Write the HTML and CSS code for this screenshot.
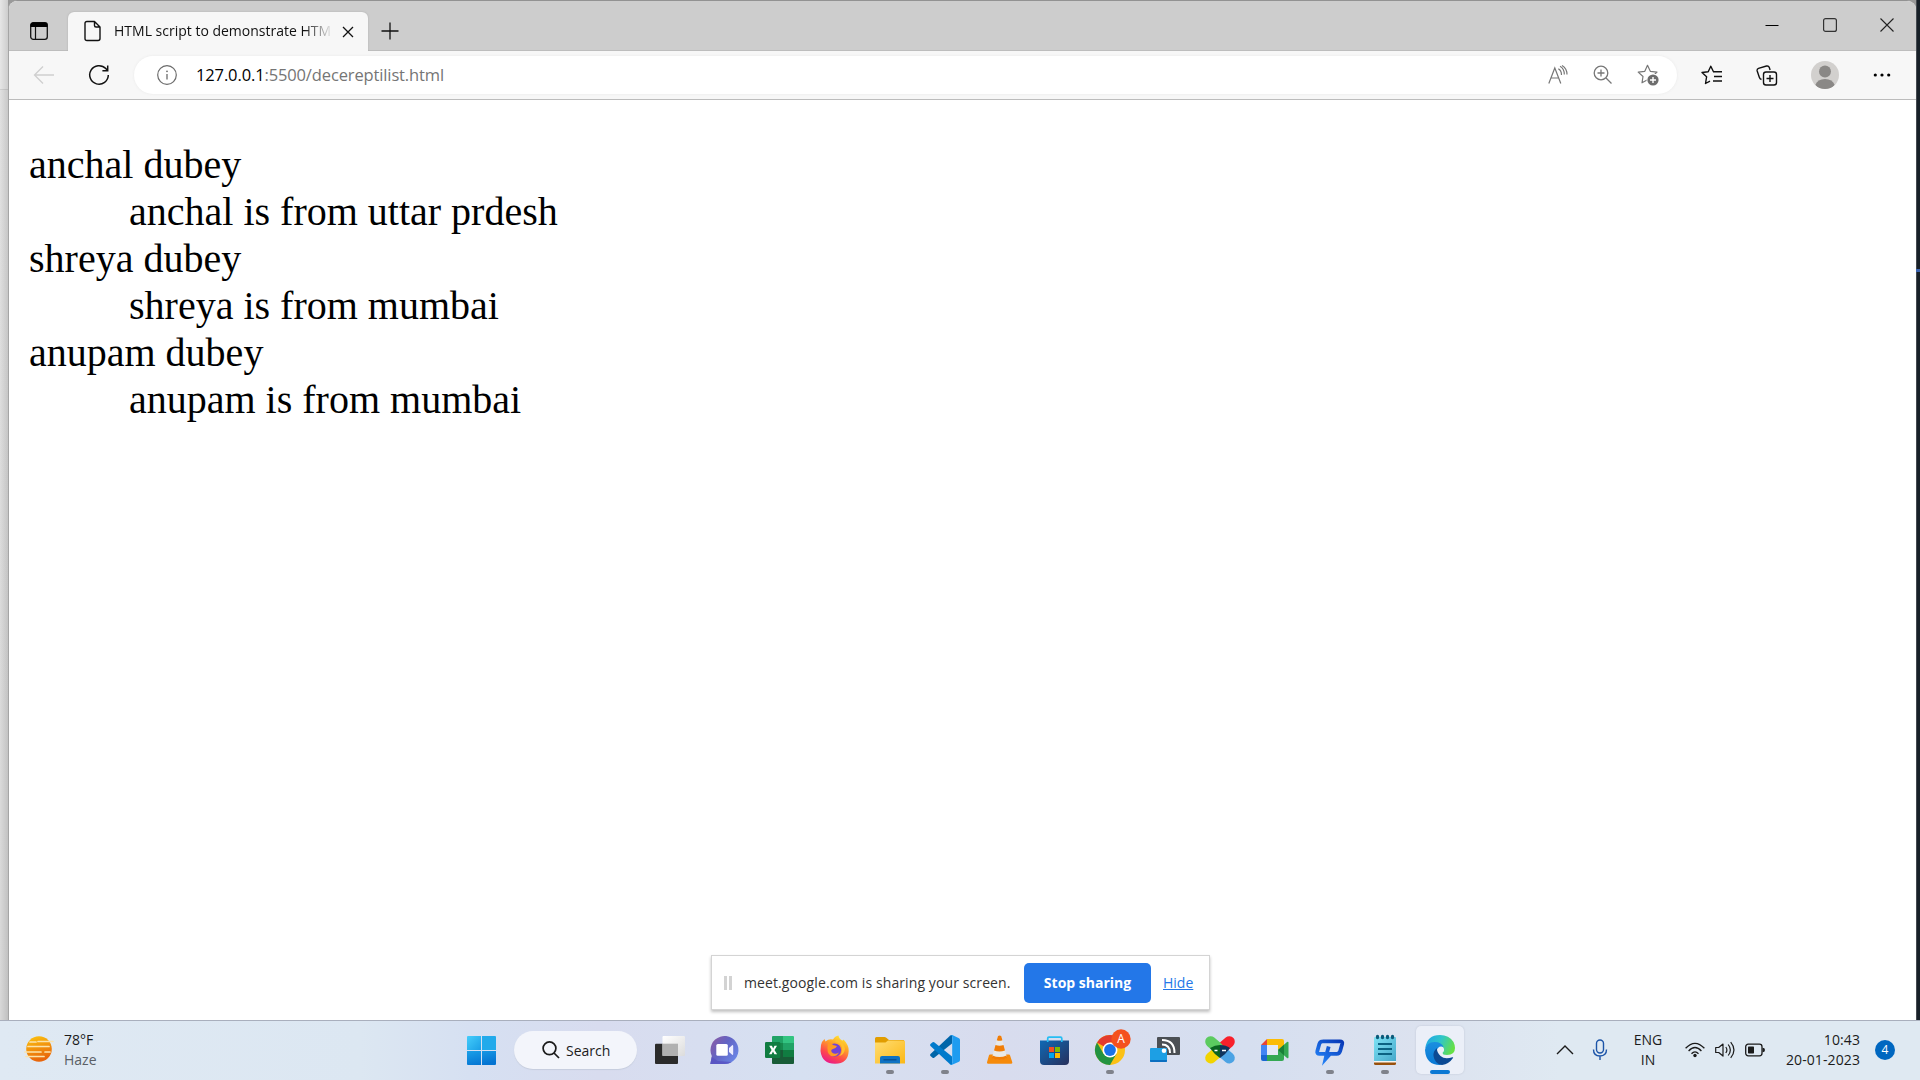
FILE: index.html
```html
<!DOCTYPE html>
<html lang="en">
<head>
<meta charset="utf-8">
<title>HTML script to demonstrate HTML description list</title>
<link rel="stylesheet" href="styles.css">
</head>
<body>
<main class="desktop">
  <div class="behind-left"></div>
  <section class="window">
    <header class="tabstrip">
      <button class="tab-actions" aria-label="Tab actions"><svg width="20" height="20" viewBox="0 0 20 20"><rect x="1.7" y="1.7" width="16.6" height="16.6" rx="2.6" fill="none" stroke="#111" stroke-width="1.3"/><path d="M1.5 6V4q0-2.500 2.500-2.500h12q2.500 0 2.500 2.500v2z" fill="#000"/><path d="M6.500 6v12" stroke="#111" stroke-width="1.200"/></svg></button>
      <div class="tab">
        <svg class="page-icon" width="18" height="22" viewBox="0 0 18 22" fill="none" stroke="#111" stroke-width="1.400" stroke-linejoin="round"><path d="M3 1.500h7.500l5.500 5.500v11.500q0 2-2 2H3q-2 0-2-2v-15q0-2 2-2zM10.500 1.500v4q0 1.500 1.500 1.500h4"/></svg>
        <span class="tab-title">HTML script to demonstrate HTM</span>
        <svg class="tab-close" width="12" height="12" viewBox="0 0 12 12"><path d="M1 1l10 10M11 1L1 11" stroke="#111" stroke-width="1.300"/></svg>
      </div>
      <svg class="new-tab" width="18" height="18" viewBox="0 0 18 18"><path d="M9 .5v17M.5 9h17" stroke="#111" stroke-width="1.300"/></svg>
      <div class="caption-buttons">
        <svg width="14" height="14" viewBox="0 0 14 14"><path d="M.5 7.500h13" stroke="#000" stroke-width="1"/></svg>
        <svg width="14" height="14" viewBox="0 0 14 14"><rect x=".6" y=".6" width="12.800" height="12.800" rx="2" fill="none" stroke="#333" stroke-width="1.200"/></svg>
        <svg width="14" height="14" viewBox="0 0 14 14"><path d="M.5 .5l13 13M13.500 .5l-13 13" stroke="#222" stroke-width="1.100"/></svg>
      </div>
    </header>
    <nav class="toolbar">
      <svg class="back" width="22" height="20" viewBox="0 0 22 20" fill="none" stroke="#cfcfcf" stroke-width="1.300"><path d="M21 10H1.500M10 1.500L1.500 10l8.500 8.500"/></svg>
      <svg class="reload" width="22" height="22" viewBox="0 0 22 22" fill="none" stroke="#111" stroke-width="1.500"><path d="M20.300 11a9.300 9.300 0 1 1-2.500-6.400l1.700 2"/><path d="M19.700 1.500v5.300h-5.300"/></svg>
      <div class="address">
        <svg class="info" width="20" height="20" viewBox="0 0 20 20"><circle cx="10" cy="10" r="9.300" fill="none" stroke="#6b6b6b" stroke-width="1.200"/><path d="M10 9v5.500" stroke="#6b6b6b" stroke-width="1.300"/><circle cx="10" cy="6.300" r=".9" fill="#6b6b6b"/></svg>
        <span class="url"><b>127.0.0.1</b>:5500/decereptilist.html</span>
        <div class="address-icons">
          <svg width="20" height="20" viewBox="0 0 20 20" fill="none" stroke="#777" stroke-width="1.200"><path d="M.8 18.500L6.800 3l6 15.500M2.800 13h8M10.300 3.800q3.200 1.700 3.200 6.200M12 1.200q4.300 2.200 4.300 8.300M14 .5q5 3 5 9"/></svg>
          <svg width="20" height="20" viewBox="0 0 20 20" fill="none" stroke="#777" stroke-width="1.300"><circle cx="8" cy="8" r="6.800"/><path d="M13 13l5.500 5.500M8 4.500v7M4.500 8h7"/></svg>
          <svg width="22" height="22" viewBox="0 0 22 22"><path d="M10.500 1.300l2.800 6 6.700.8-5 4.700 1 6-5.500-3-5.500 3 1-6.300L1.200 8.100l6.600-.8z" fill="none" stroke="#777" stroke-width="1.200" stroke-linejoin="round"/><circle cx="16" cy="16" r="6.500" fill="#fff"/><circle cx="16" cy="16" r="5.600" fill="#6d6d6d"/><path d="M16 13v6M13 16h6" stroke="#fff" stroke-width="1.400"/></svg>
        </div>
      </div>
      <div class="browser-icons">
        <svg width="22" height="20" viewBox="0 0 22 20" fill="none" stroke="#111" stroke-width="1.400" stroke-linejoin="round"><path d="M12.500 6.800L9.800 1.200 7.200 6.700l-6.200.8 4.600 4.300L4.500 18.500l4.500-2.400M12 6.800h9M13 11.500h8M12 16h9"/></svg>
        <svg width="22" height="21" viewBox="0 0 22 21" fill="none" stroke="#111" stroke-width="1.400"><rect x="7.500" y="7" width="13" height="13" rx="2.500"/><path d="M14 10v7M10.500 13.500h7M5.500 14.500Q3.800 14 3.300 12.200L1.200 6Q.7 4 2.500 3.300L10.500 1Q12.700.6 13.300 2.500l.8 2.500"/></svg>
        <svg width="28" height="28" viewBox="0 0 28 28"><defs><clipPath id="face"><circle cx="14" cy="14" r="14"/></clipPath></defs><circle cx="14" cy="14" r="14" fill="#d2d0ce"/><g clip-path="url(#face)" fill="#8a8886"><circle cx="14" cy="10.500" r="6"/><path d="M4.300 24Q6.500 18 14 18t9.700 6L20 28H8z"/></g></svg>
        <svg class="more" width="18" height="6" viewBox="0 0 18 6" fill="#000"><circle cx="2.300" cy="3" r="1.600"/><circle cx="9" cy="3" r="1.600"/><circle cx="15.700" cy="3" r="1.600"/></svg>
      </div>
    </nav>
    <article class="page">
      <dl class="people">
        <dt>anchal dubey</dt><dd>anchal is from uttar prdesh</dd>
        <dt>shreya dubey</dt><dd>shreya is from mumbai</dd>
        <dt>anupam dubey</dt><dd>anupam is from mumbai</dd>
      </dl>
    </article>
  </section>
  <div class="behind-right"><i class="accent"></i></div>
  <aside class="share-bar">
    <i class="grip"></i>
    <span class="share-text">meet.google.com is sharing your screen.</span>
    <button class="stop">Stop sharing</button>
    <a class="hide">Hide</a>
  </aside>
</main>
<footer class="taskbar">
  <div class="weather">
    <svg width="30" height="28" viewBox="0 0 30 28"><defs><linearGradient id="sun" x1="0" y1="0" x2=".3" y2="1"><stop stop-color="#fcc60e"/><stop offset="1" stop-color="#e8660c"/></linearGradient></defs><circle cx="15" cy="14" r="12.800" fill="url(#sun)"/><g stroke="#fbe3ac" stroke-width="1.700" stroke-linecap="round"><path d="M6 7h6M14 6.500h15M4 11.500h13M16 11.500h9"/><path d="M1 17h16M21 17h5M2 21.500h18"/></g></svg>
    <div class="weather-text"><span class="temp">78°F</span><span class="sky">Haze</span></div>
  </div>
  <div class="apps">
    <div class="app"><svg viewBox="0 0 32 32"><defs><linearGradient id="win" x1="0" y1="0" x2="1" y2="1" gradientUnits="objectBoundingBox"><stop stop-color="#45cdfb"/><stop offset="1" stop-color="#1a9fe6"/></linearGradient><linearGradient id="winb" x1="0" y1="0" x2=".5" y2="1"><stop stop-color="#1ba0e8"/><stop offset="1" stop-color="#0474d2"/></linearGradient></defs><path d="M3 2h13v14H2V3q0-1 1-1z" fill="url(#win)"/><path d="M17 2h13q1 0 1 1v13H17z" fill="#22aaeb"/><path d="M2 17h14v14H3q-1 0-1-1zM17 17h14v13q0 1-1 1H17z" fill="url(#winb)"/></svg></div>
    <div class="search"><svg width="18" height="18" viewBox="0 0 18 18" fill="none" stroke="#1b1b1b" stroke-width="1.700"><circle cx="7.500" cy="7.300" r="6.400"/><path d="M12 12l5 5"/></svg><span>Search</span></div>
    <div class="app"><svg viewBox="0 0 32 32"><defs><linearGradient id="tv" x1="0" y1="0" x2="1" y2="1"><stop stop-color="#fff"/><stop offset="1" stop-color="#dcdcdc"/></linearGradient></defs><rect x="1" y="9.700" width="23" height="20.300" rx="1" fill="#2b2b2b"/><rect x="8.500" y="2" width="22.500" height="20" rx="1" fill="url(#tv)"/><rect x="8.500" y="9.700" width="15.500" height="12.300" fill="#b1b1b1"/></svg></div>
    <div class="app"><svg viewBox="0 0 32 32"><defs><linearGradient id="chat" x1="0" y1="0" x2="1" y2=".7"><stop stop-color="#91599f"/><stop offset=".5" stop-color="#6264c4"/><stop offset="1" stop-color="#6b86e6"/></linearGradient></defs><path d="M1.300 30L2.800 22A14 14 0 1 1 15.700 30z" fill="url(#chat)"/><path d="M1.300 30l1.500-7 6 4 14 1q-3 2-7 2z" fill="#5751c2" opacity=".8"/><rect x="7.300" y="10" width="11.500" height="11.700" rx="1.500" fill="#fff"/><path d="M20 14l3.500-3q.7 0 .7 1v8q0 1-.7 1L20 18z" fill="#eef"/></svg></div>
    <div class="app"><svg viewBox="0 0 32 32"><path d="M9 2h10v7H8V3q0-1 1-1z" fill="#21a366"/><path d="M19 2h10q1 0 1 1v6H19z" fill="#33c481"/><path d="M8 9h11v7H8z" fill="#16884c"/><path d="M19 9h11v7H19z" fill="#21a366"/><path d="M19 16h11v7H19z" fill="#107c41"/><path d="M8 16h11v7h11v6q0 1-1 1H9q-1 0-1-1z" fill="#185c37"/><rect x="1" y="8" width="15.300" height="16" rx="1.300" fill="#107c41"/><path d="M5.200 11.800h2.700l1.300 2.600 1.300-2.600h2.500l-2.500 4.200 2.600 4.300h-2.700l-1.400-2.800-1.400 2.800H5l2.600-4.300z" fill="#fff"/></svg></div>
    <div class="app"><svg viewBox="0 0 32 32"><defs><linearGradient id="ff" x1=".8" y1="0" x2=".3" y2="1"><stop stop-color="#fff036"/><stop offset=".35" stop-color="#ffa427"/><stop offset=".7" stop-color="#ff4a4a"/><stop offset="1" stop-color="#e9188c"/></linearGradient></defs><path d="M2 11q1-4 3.500-6l1 2.500Q10 4.300 14 5.500 16 2 19.500 1.500q.5 3.500 4 5 1-.3 1-1Q30 11 29.700 17 29 29.700 16 29.700T1.500 17z" fill="url(#ff)"/><circle cx="15.500" cy="16" r="6.600" fill="#7142d8"/><path d="M9 9q4 0 5 2l4 1q-1 2.500-4 3-3 1-1 3.500 3 2.500 7 0-3 5-8 3.500-5-2-3-13z" fill="#ff9a22"/><path d="M16 8q6 0 7 6 .5 5-3 8 5-1 6-7-1-7-8-10z" fill="#ffc12f"/></svg></div>
    <div class="app running"><svg viewBox="0 0 32 32"><defs><linearGradient id="fold" x1="0" y1="0" x2="1" y2="1"><stop stop-color="#ffdd73"/><stop offset="1" stop-color="#fbb815"/></linearGradient></defs><path d="M1 9V4.500Q1 3 2.500 3h8q1 0 1.800.8L15 6h15v4z" fill="#e19d00"/><path d="M1 8.500h10.500L14 6.500h16q1 0 1 1v22H1z" fill="url(#fold)"/><path d="M6 29.500v-5.500q0-2 2-2h16q2 0 2 2v5.500z" fill="#0e72c4"/><path d="M9.500 25.800h13" stroke="#064a8c" stroke-width="1.200"/></svg></div>
    <div class="app running"><svg viewBox="0 0 32 32"><path d="M23 1v8.500L5.200 23.800q-.8.600-1.600 0L1.500 22q-1-1 0-2L21 1.700q1-.9 2-.7z" fill="#0065a9"/><path d="M23 31v-8.500L5.200 8.200q-.8-.6-1.600 0L1.500 10q-1 1 0 2L21 30.300q1 .9 2 .7z" fill="#007acc"/><path d="M22.500 31q-1-.2-1.800-1 2.300 1.300 2.500-1V3q-.2-2.300-2.500-1 1-1.200 2.600-1L30 4.200q1 .5 1 1.800v20q0 1.300-1 1.800z" fill="#1f9cf0"/></svg></div>
    <div class="app"><svg viewBox="0 0 32 32"><path d="M6 20.500h19q.8 0 1 .8l2.300 7q.3 1.400-1 1.400H4q-1.300 0-1-1.400l2-7q.2-.8 1-.8z" fill="#f58a0b"/><path d="M14 2q1.600-1 3.200 0L23 23.500q-7.500 4-15 0z" fill="#e9e9e7"/><path d="M14 2q1.600-1 3.200 0l1.200 4.300q-2.800 1-5.600 0zM11.500 11q4 1.500 8 0l1.500 5.500q-5.500 2-11 0zM8.500 21.500q7 3 14 0l.7 2.500q-7.700 4-15.400 0z" fill="#f07d08"/></svg></div>
    <div class="app"><svg viewBox="0 0 32 32"><defs><linearGradient id="store" x1="0" y1="0" x2="1" y2="1"><stop stop-color="#0f69b5"/><stop offset="1" stop-color="#28305c"/></linearGradient></defs><path d="M1 6.500h29V27q0 4-4 4H5q-4 0-4-4z" fill="url(#store)"/><path d="M8.700 8V4.500q0-1.300 1.300-1.300h11.500q1.300 0 1.300 1.300V8" fill="none" stroke="#26bdf3" stroke-width="1.700"/><path d="M10 13h5v5h-5z" fill="#f25022"/><path d="M16 13h5v5h-5z" fill="#7fba00"/><path d="M10 19h5v5h-5z" fill="#00a4ef"/><path d="M16 19h5v5h-5z" fill="#ffb900"/></svg></div>
    <div class="app running"><svg viewBox="0 0 32 32"><circle cx="16" cy="16" r="15" fill="#fbc116"/><path d="M16 16L3 8.500A15 15 0 0 1 29 8.500H16z" fill="#e33b2e"/><path d="M16 16l6.500 3.700L16 31A15 15 0 0 1 3 8.500l6.500 11.200z" fill="#229342"/><circle cx="16" cy="16" r="7.500" fill="#fff"/><circle cx="16" cy="16" r="5.900" fill="#1a73e8"/><circle cx="27" cy="5" r="9.700" fill="#f4511e"/><text x="27" y="9.300" class="badge-letter">A</text></svg></div>
    <div class="app"><svg viewBox="0 0 32 32"><rect x="8" y="3" width="23" height="18" rx="1" fill="#4b4f54"/><rect x="1" y="14" width="17" height="14" rx="1" fill="#1d9fe4"/><path d="M1 26h17v1q0 1-1 1H2q-1 0-1-1z" fill="#0b6fc0"/><circle cx="15" cy="16.700" r="2.300" fill="#fff"/><path d="M13 10.500q8 0 8 8.500M13 6q12.500 0 12.500 13" fill="none" stroke="#fff" stroke-width="2"/></svg></div>
    <div class="app"><svg viewBox="0 0 32 32"><g stroke-width="11" stroke-linecap="round"><path d="M6.700 24l7-6" stroke="#f2d400"/><path d="M25.300 24l-7-6" stroke="#4ca3e4"/><path d="M25.300 7.700l-7 6" stroke="#f8202b"/><path d="M6.700 7.700l7 6" stroke="#5ccb5f"/></g><path d="M6 14q5-3 10-3v13Q10 20 6 14z" fill="#0b6420"/><path d="M16 11q6 0 10 3-4 6-10 10z" fill="#10345c"/><path d="M10.500 16.500h3M18 16.500h4" stroke="#fff" stroke-width="1.600"/></svg></div>
    <div class="app"><svg viewBox="0 0 32 32"><path d="M8 5h15q2 0 2 2v5l-6 4v-5H8z" fill="#fcbc05"/><path d="M8 5v6H2z" fill="#ea4335"/><path d="M2 11h6v10H2z" fill="#4285f4"/><path d="M2 21h6v6H4q-2 0-2-2z" fill="#1967d2"/><path d="M8 21h11v-5l6 3v6q0 2-2 2H8z" fill="#34a853"/><path d="M8 11h11v10H8z" fill="#e4e9f5"/><path d="M19 16l9-8q1.500-1 1.500.8v14.500q0 1.700-1.500.7z" fill="#34a853"/><path d="M19 16l6-5.300v10.600z" fill="#188038"/></svg></div>
    <div class="app running"><svg viewBox="0 0 32 32"><defs><linearGradient id="pp" x1="1" y1="0" x2="0" y2="1"><stop stop-color="#0838b6"/><stop offset="1" stop-color="#2380f5"/></linearGradient></defs><path d="M8.500 7.300H26q2.800 0 2.200 2.500l-2 7.200q-.8 2.800-3.500 2.800h-6.500L11.500 25l1.200-5.200 2-7.300M11 19.800H5.500q-2.800 0-2.200-2.500l2-7.200q.8-2.800 3.500-2.800" fill="none" stroke="url(#pp)" stroke-width="3.800"/></svg></div>
    <div class="app running"><svg viewBox="0 0 32 32"><defs><linearGradient id="note" x1="0" y1="0" x2="1" y2="1"><stop stop-color="#7fe3f5"/><stop offset="1" stop-color="#46a8ca"/></linearGradient></defs><path d="M5 26h22v3.500q0 1.500-1.500 1.500h-19Q5 31 5 29.500z" fill="#97500c"/><path d="M5 25h22v3.500H5z" fill="#f7f4ef"/><path d="M6 3h20q1 0 1 1v23H5V4q0-1 1-1z" fill="url(#note)"/><g fill="#0c5a79"><ellipse cx="8.500" cy="3" rx="1.700" ry="2.200"/><ellipse cx="13.500" cy="3" rx="1.700" ry="2.200"/><ellipse cx="18.500" cy="3" rx="1.700" ry="2.200"/><ellipse cx="23.500" cy="3" rx="1.700" ry="2.200"/></g><path d="M9 10h14M9 15h14M9 20h14" stroke="#0b6282" stroke-width="1.800"/></svg></div>
    <div class="app active"><svg viewBox="0 0 32 32"><defs><linearGradient id="e1" x1="0" y1=".2" x2="1" y2=".5"><stop stop-color="#1fa6e6"/><stop offset=".5" stop-color="#30c6c8"/><stop offset="1" stop-color="#66e043"/></linearGradient><linearGradient id="e2" x1="0" y1="0" x2="0" y2="1"><stop stop-color="#1b8fe0"/><stop offset="1" stop-color="#0878d4"/></linearGradient></defs><path d="M1.300 14Q3 1 16 1 25 1 29.500 8q1.500 3 1.500 6 0 7-8 7-5 0-4.300-2.500 2-1.500 1-4.500-2-4-8-5Q5 8.500 1.300 14z" fill="url(#e1)"/><path d="M1 16Q2.500 8 10.500 8q7.500 0 9.200 5.500-3-2-5.700.5-3 3.500-.5 8.500 2.500 4 7.500 5.500-2 3-5 3Q2 31 1 16z" fill="url(#e2)"/><path d="M13 14q-4 3-3.500 8 1 7.500 8.500 9 7-1 11-7 .5-1-.6-.8-7.400 2.800-11.900-1.200-4-4-3.500-8z" fill="#0c4a94"/></svg></div>
  </div>
  <div class="tray">
    <svg class="chevron" width="18" height="10" viewBox="0 0 18 10"><path d="M1 9l8-8 8 8" fill="none" stroke="#1b1b1b" stroke-width="1.400"/></svg>
    <svg class="mic" width="16" height="22" viewBox="0 0 16 22" fill="none" stroke="#1c54a8" stroke-width="1.400"><rect x="4.500" y="1" width="7" height="13" rx="3.500"/><path d="M1.500 10.500q0 6.500 6.500 6.500t6.500-6.500M8 17v4"/></svg>
    <div class="lang"><span>ENG</span><span>IN</span></div>
    <svg class="wifi" width="20" height="16" viewBox="0 0 20 16" fill="none" stroke="#1b1b1b" stroke-width="1.300"><path d="M.6 6.300q9.400-10 18.800 0M3.600 9q6.400-7 12.800 0M6.500 11.800q3.500-4 7 0"/><circle cx="10" cy="13.500" r="1.700" fill="#1b1b1b" stroke="none"/></svg>
    <svg class="volume" width="20" height="18" viewBox="0 0 20 18" fill="none" stroke="#1b1b1b" stroke-width="1.200"><path d="M.7 6.500v5h3L8 15V3L3.700 6.500zM10.800 6q2.200 3 0 6M13.200 3.500q4.300 5.500 0 11M15.700 1.200q6.500 7.800 0 15.600" stroke-linejoin="round"/></svg>
    <svg class="battery" width="20" height="14" viewBox="0 0 20 14"><rect x=".7" y="1.200" width="16.300" height="11.600" rx="2.500" fill="none" stroke="#1b1b1b" stroke-width="1.300"/><rect x="3" y="3.500" width="6" height="7" rx=".7" fill="#1b1b1b"/><path d="M17.500 4.700q2.500 0 2.500 2.300t-2.500 2.300z" fill="#1b1b1b"/></svg>
    <div class="clock"><span>10:43</span><span>20-01-2023</span></div>
    <span class="count">4</span>
  </div>
</footer>
</body>
</html>
```
FILE: styles.css
```css
* { box-sizing: border-box; }
body {
  margin: 0;
  width: 1920px;
  height: 1080px;
  overflow: hidden;
  display: flex;
  flex-direction: column;
  font-family: "Open Sans", "Noto Sans", sans-serif;
  font-size: 14px;
  color: #1b1b1b;
}
svg { display: block; flex: none; }
button { border: 0; padding: 0; background: none; font: inherit; }

.desktop { position: relative; display: flex; height: 1020px; background: #999; }
.behind-left {
  width: 8px;
  background: linear-gradient(90deg, rgba(0,0,0,0), rgba(0,0,0,.11)), linear-gradient(#e6e6e6 89px, #cfcfcf 89px 90px, #e1e1e1 90px, #d8d8d8);
}
.behind-right { width: 4px; padding-top: 269px; background: linear-gradient(90deg, #454a50 1px, #182028 1px); }
.accent { display: block; height: 3px; background: #3d65b0; }

.window {
  width: 1908px;
  display: flex;
  flex-direction: column;
  border-left: 1px solid #a5a5a5;
  border-top: 1px solid #929292;
  border-radius: 9px 9px 0 0;
  overflow: hidden;
  background: #fff;
}
.tabstrip {
  display: flex;
  align-items: center;
  height: 50px;
  padding-left: 20px;
  background: #cdcdcd;
  border-bottom: 1px solid #bdbdbd;
}
.tab-actions { margin-top: 11px; }
.tab {
  align-self: flex-end;
  display: flex;
  align-items: center;
  width: 300px;
  height: 39px;
  margin: 0 13px -1px 19px;
  padding: 0 14px 2px 16px;
  border-radius: 6px 6px 0 0;
  background: #f7f7f7;
  box-shadow: 0 0 2px #aaa;
  clip-path: inset(-3px -3px 0 -3px);
}
.tab-title {
  width: 219px;
  margin-left: 12px;
  white-space: nowrap;
  font-size: 14px;
  color: #111;
  -webkit-mask-image: linear-gradient(90deg, #000 190px, transparent 219px);
  mask-image: linear-gradient(90deg, #000 190px, transparent 219px);
}
.tab-close { margin: 2px 0 0 9px; }
.new-tab { margin-top: 11px; }
.caption-buttons { display: flex; gap: 43.500px; margin-left: auto; padding: 0 22px 1px 0; }

.toolbar {
  display: flex;
  align-items: center;
  height: 49px;
  padding-left: 24px;
  background: #f7f7f7;
  border-bottom: 1px solid #bcbcbc;
}
.reload { margin-left: 33px; }
.address {
  display: flex;
  align-items: center;
  width: 1543px;
  height: 38px;
  margin-left: 24px;
  padding: 0 18px 0 23px;
  border-radius: 19px;
  background: #fff;
  box-shadow: 0 0 3px #e9e9e9;
}
.info { margin-bottom: 1px; }
.url { margin-left: 19px; padding-bottom: 2px; font-size: 16.500px; letter-spacing: -.13px; color: #757575; white-space: nowrap; }
.url b { font-weight: 400; color: #000; }
.address-icons { display: flex; align-items: center; gap: 24.500px; margin-left: auto; }
.browser-icons { display: flex; align-items: center; margin-left: 24px; gap: 33px; }
.more { margin-left: 1px; }

.page { flex: 1; padding: 0 20px; font: 40px/47px "Liberation Serif", serif; color: #000; }
.people { margin: 41px 0; }
.people dd { margin-left: 100px; }

.share-bar {
  position: absolute;
  left: 711px;
  top: 955px;
  display: flex;
  align-items: center;
  width: 499px;
  height: 55px;
  padding-left: 12px;
  background: #fff;
  border: 1px solid #d4d4d4;
  box-shadow: 0 2px 3px rgba(0,0,0,.25);
  white-space: nowrap;
}
.grip { width: 8px; height: 14px; border: solid #d3d3d3; border-width: 0 3px; }
.share-text { width: 280px; margin-left: 12px; letter-spacing: .1px; color: #333; }
.stop { width: 127px; height: 40px; border-radius: 5px; background: #2377e8; color: #fff; font-weight: 700; font-size: 14px; }
.hide { margin-left: 12px; color: #2377e8; text-decoration: underline; }

.taskbar {
  display: flex;
  align-items: center;
  height: 60px;
  padding-bottom: 1px;
  border-top: 1px solid #a9afbd;
  background: linear-gradient(90deg, #dfe9f3 0, #dce7f2 360px, #d6e0f2 470px, #d8dcef 600px, #d6e0f1 800px, #d8dcee 1000px, #d6dff0 1250px, #dce2ef 1420px, #dfe9f2 1560px);
}
.weather { display: flex; align-items: center; width: 453.500px; padding-left: 24px; gap: 10px; }
.weather-text, .lang, .clock { display: flex; flex-direction: column; line-height: 20px; }
.weather svg { margin-bottom: 2px; }
.weather-text, .clock { margin-bottom: 1px; }
.sky { color: #5a5f66; }
.apps { display: flex; align-items: center; height: 58px; }
.app { position: relative; display: flex; justify-content: center; align-items: center; width: 55px; height: 48px; }
.app svg { position: relative; width: 32px; height: 32px; overflow: visible; }
.running::after, .active::after {
  content: "";
  position: absolute;
  bottom: 0;
  width: 8px;
  height: 4px;
  border-radius: 2px;
  background: #7f828b;
}
.active::before {
  content: "";
  position: absolute;
  inset: 0 3.500px;
  border-radius: 5px;
  background: #ebeff8;
  box-shadow: 0 0 2px #bcc3d2;
}
.active::after { width: 20px; background: #0a78d4; }
.badge-letter { font: 12px "Open Sans", sans-serif; fill: #fff; text-anchor: middle; }
.search {
  display: flex;
  align-items: center;
  gap: 6px;
  width: 123px;
  height: 38px;
  margin: 0 5.500px;
  padding-left: 28px;
  border-radius: 19px;
  background: #f3f5fb;
  box-shadow: 0 1px 1px #c6cddd;
}
.tray { display: flex; align-items: center; margin-left: auto; padding-right: 25px; white-space: nowrap; }
.mic { margin-left: 18px; }
.lang { width: 40px; margin-left: 20px; align-items: center; }
.wifi { margin-left: 17px; }
.volume { margin-left: 10px; }
.battery { margin-left: 10px; }
.clock { width: 80px; margin-left: 15px; align-items: flex-end; letter-spacing: .1px; }
.count { width: 20px; height: 20px; margin-left: 15px; border-radius: 50%; background: #0067c0; color: #fff; font-size: 12px; line-height: 20px; text-align: center; }
```
